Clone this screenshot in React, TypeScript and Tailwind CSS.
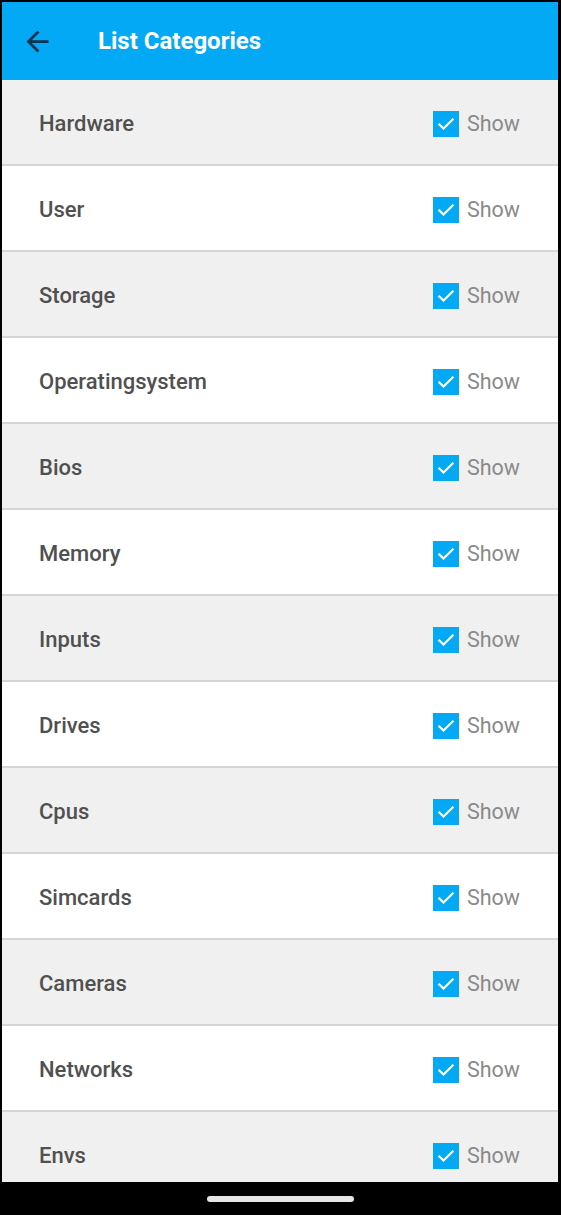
import React from "react";

const items = [
  "Hardware",
  "User",
  "Storage",
  "Operatingsystem",
  "Bios",
  "Memory",
  "Inputs",
  "Drives",
  "Cpus",
  "Simcards",
  "Cameras",
  "Networks",
  "Envs",
];

function Check() {
  return (
    <div className="w-[26px] h-[26px] bg-[#03a9f4] flex items-center justify-center">
      <svg width="20" height="20" viewBox="0 0 24 24" fill="none">
        <path d="M4 12.5l5 5L20 6.5" stroke="white" strokeWidth="2.6" strokeLinecap="square" strokeLinejoin="miter" />
      </svg>
    </div>
  );
}

export default function App() {
  return (
    <div
      className="w-[561px] h-[1215px] bg-black pt-[2px] pl-[2px] pr-[3px] flex flex-col overflow-hidden"
      style={{ fontFamily: "Roboto, 'Noto Sans', sans-serif" }}
    >
      <div className="h-[78px] shrink-0 bg-[#03a9f4] flex items-center">
        <div className="w-[96px] pl-[19px] flex items-center">
          <svg width="33" height="33" viewBox="0 0 24 24" fill="#0f3350">
            <path d="M20 11H7.83l5.59-5.59L12 4l-8 8 8 8 1.41-1.41L7.83 13H20v-2z" />
          </svg>
        </div>
        <span className="text-white text-[24px] font-bold">List Categories</span>
      </div>
      <div className="flex-1 overflow-hidden flex flex-col">
        {items.map((name, i) => (
          <div
            key={name}
            className={`h-[86px] shrink-0 border-b-2 border-[#d5d5d5] flex items-center pl-[37px] pr-[38px] pt-[4px] ${
              i % 2 === 0 ? "bg-[#f0f0f0]" : "bg-white"
            }`}
          >
            <span className="flex-1 text-[22px] font-medium text-[#505050] leading-[26px]">{name}</span>
            <div className="flex items-center gap-[8px]">
              <Check />
              <span className="text-[21.5px] text-[#8a8a8a] leading-[26px]">Show</span>
            </div>
          </div>
        ))}
      </div>
      <div className="h-[33px] shrink-0 bg-black flex items-center justify-center">
        <div className="w-[147px] h-[6px] rounded-full bg-[#e6e6e6]" />
      </div>
    </div>
  );
}
